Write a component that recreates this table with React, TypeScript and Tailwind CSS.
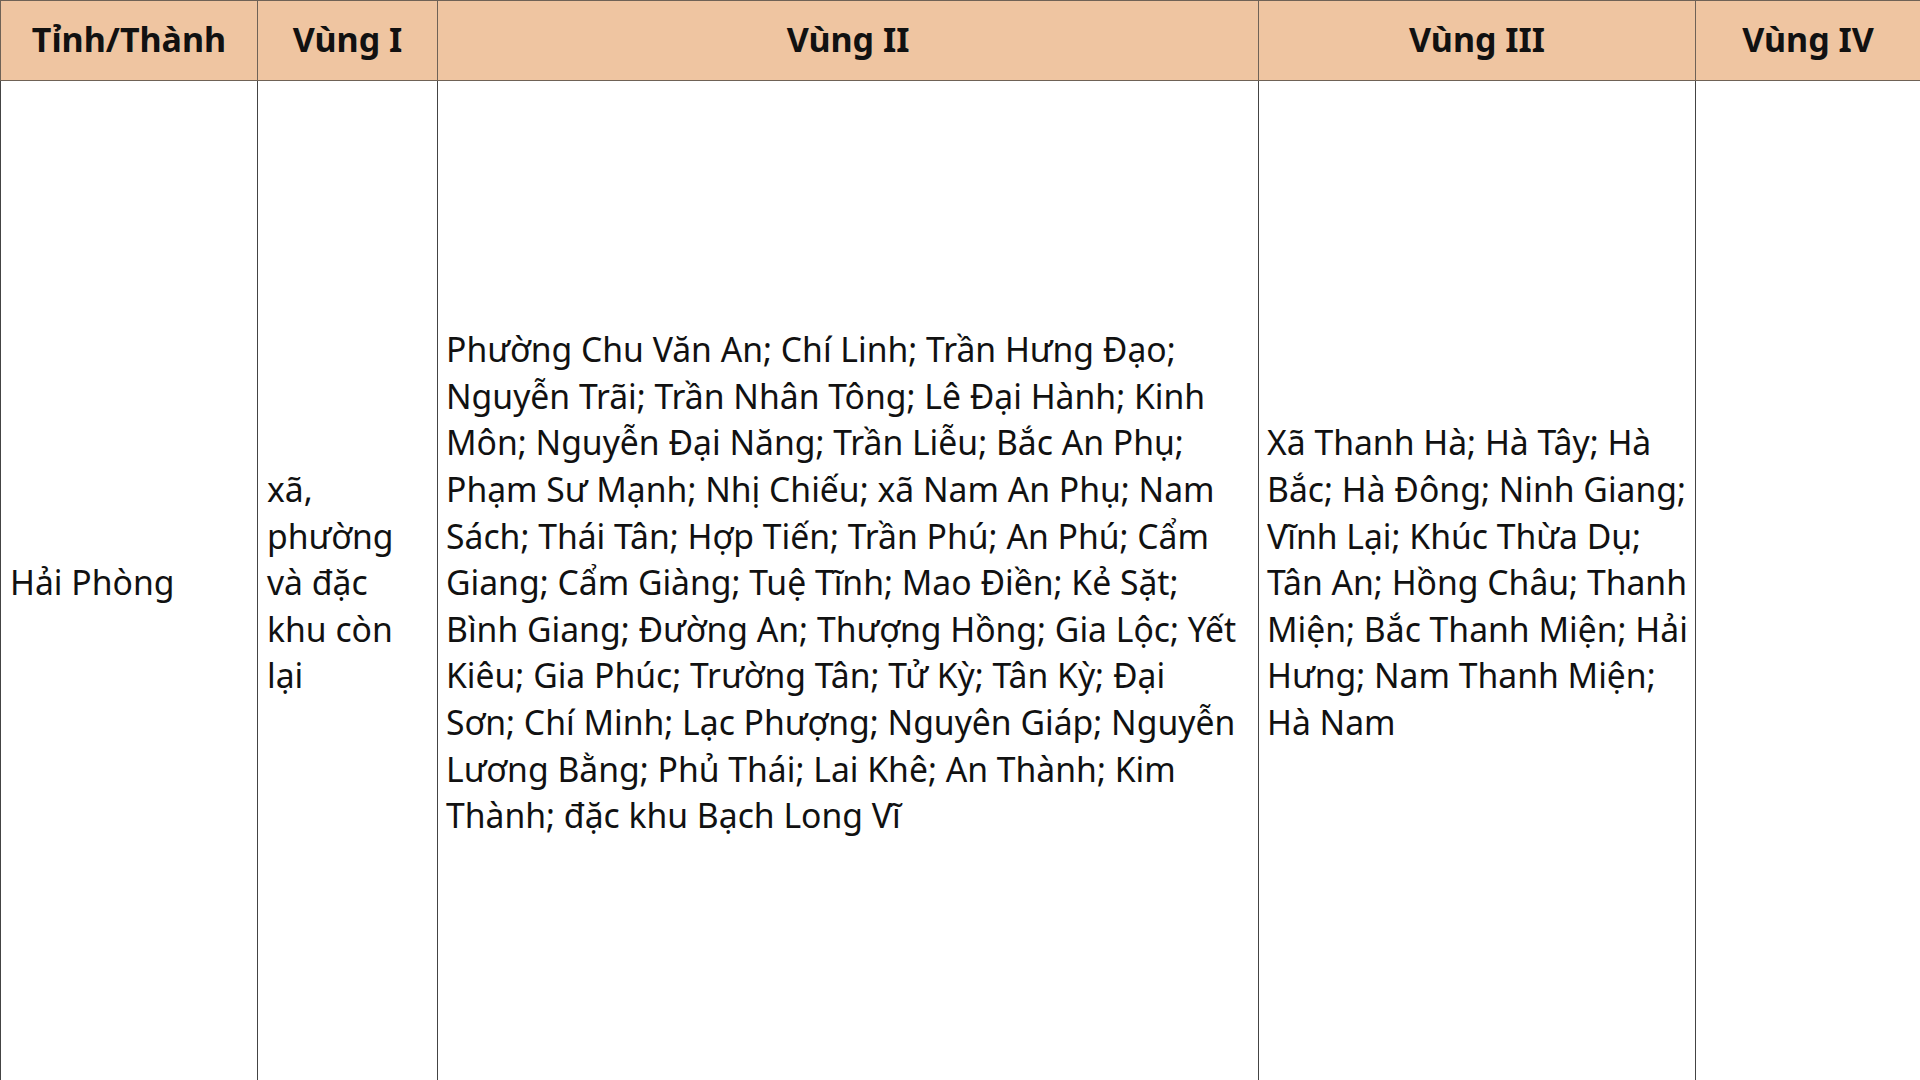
import React from "react"

const headers = ["Tỉnh/Thành", "Vùng I", "Vùng II", "Vùng III", "Vùng IV"]

const vung2 =
  "Phường Chu Văn An; Chí Linh; Trần Hưng Đạo; Nguyễn Trãi; Trần Nhân Tông; Lê Đại Hành; Kinh Môn; Nguyễn Đại Năng; Trần Liễu; Bắc An Phụ; Phạm Sư Mạnh; Nhị Chiếu; xã Nam An Phụ; Nam Sách; Thái Tân; Hợp Tiến; Trần Phú; An Phú; Cẩm Giang; Cẩm Giàng; Tuệ Tĩnh; Mao Điền; Kẻ Sặt; Bình Giang; Đường An; Thượng Hồng; Gia Lộc; Yết Kiêu; Gia Phúc; Trường Tân; Tử Kỳ; Tân Kỳ; Đại Sơn; Chí Minh; Lạc Phượng; Nguyên Giáp; Nguyễn Lương Bằng; Phủ Thái; Lai Khê; An Thành; Kim Thành; đặc khu Bạch Long Vĩ"

const vung3 =
  "Xã Thanh Hà; Hà Tây; Hà Bắc; Hà Đông; Ninh Giang; Vĩnh Lại; Khúc Thừa Dụ; Tân An; Hồng Châu; Thanh Miện; Bắc Thanh Miện; Hải Hưng; Nam Thanh Miện; Hà Nam"

export default function App() {
  return (
    <div className="h-[1080px] w-[1920px] overflow-hidden bg-white text-[#111] font-['Noto_Sans',sans-serif]">
      <table className="w-[1920px] table-fixed border-collapse">
        <colgroup>
          <col className="w-[257px]" />
          <col className="w-[180px]" />
          <col className="w-[821px]" />
          <col className="w-[437px]" />
          <col className="w-[225px]" />
        </colgroup>
        <thead>
          <tr className="h-[80px] bg-[#efc5a1]">
            {headers.map((h) => (
              <th key={h} className="border border-[#6f6256] pb-[3px] text-center align-middle text-[34px] font-bold leading-none">
                {h}
              </th>
            ))}
          </tr>
        </thead>
        <tbody>
          <tr className="h-[1004px] text-[33.7px] leading-[46.6px]">
            <td className="border border-[#444] px-[9px] align-middle">Hải Phòng</td>
            <td className="border border-[#444] px-[9px] align-middle">xã, phường và đặc khu còn lại</td>
            <td className="border border-[#444] pl-[8px] pr-[19px] align-middle">{vung2}</td>
            <td className="border border-[#444] pl-[8px] pr-[2px] align-middle">{vung3}</td>
            <td className="border border-[#444] px-[9px] align-middle"></td>
          </tr>
        </tbody>
      </table>
    </div>
  )
}
